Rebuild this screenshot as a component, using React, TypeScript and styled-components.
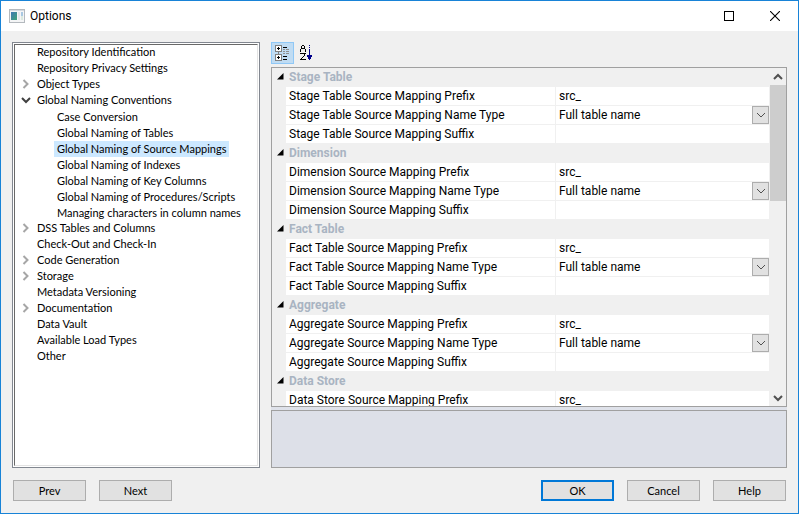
import React from "react";
import styled, { createGlobalStyle } from "styled-components";

const uiFont = '"Roboto", "Open Sans", sans-serif';
const treeFont = '"Lato", "DejaVu Sans", sans-serif';

const GlobalStyle = createGlobalStyle`
  *, *::before, *::after { box-sizing: border-box; }
  body { margin: 0; background: #fff; }
  button, input, select { font: inherit; color: inherit; margin: 0; border-radius: 0; }
`;

const Dialog = styled.div`
  display: flex;
  flex-direction: column;
  height: 100vh;
  margin-right: 1px;
  border: 1px solid #1883d7;
  background: #f0f0f0;
  color: #000;
  font: 12px/18px ${uiFont};
`;

const TitleBar = styled.header`
  display: flex;
  align-items: center;
  height: 30px;
  flex: none;
  padding-left: 8px;
  background: #fff;
`;

const Title = styled.h1`
  flex: 1;
  margin: 0 0 0 5px;
  font: inherit;
`;

const CaptionButton = styled.button`
  display: grid;
  place-items: center;
  width: 46px;
  height: 28px;
  padding: 0;
  border: 0;
  background: transparent;
`;

const Content = styled.main`
  display: flex;
  flex: 1;
  gap: 11px;
  min-height: 0;
  padding: 11px 11px 0;
`;

const TreeFrame = styled.nav`
  flex: 0 0 32%;
  padding: 1px;
  border: 1px solid #828790;
  background: #fff;
`;

const Tree = styled.ul`
  height: 100%;
  margin: 0;
  padding: 0;
  overflow: hidden;
  list-style: none;
  border: 1px solid;
  border-color: #696969 #e3e3e3 #e3e3e3 #696969;
  font: 11px/16px ${treeFont};
`;

const TreeItem = styled.li<{ $level: number }>`
  display: flex;
  height: 16px;
  line-height: ${p => (p.$level ? 15 : 13)}px;
  padding-left: ${p => (p.$level ? 39 : 3)}px;
`;

const Expander = styled.button`
  display: grid;
  place-items: center;
  width: 16px;
  height: 14px;
  padding: 0;
  border: 0;
  background: none;
`;

const ExpanderSpace = styled.span`
  width: 16px;
`;

const TreeLink = styled.a<{ $selected?: boolean }>`
  height: 16px;
  padding: 0 3px;
  color: #000;
  text-decoration: none;
  white-space: nowrap;
  background: ${p => (p.$selected ? "#cce8ff" : "transparent")};
`;

const Properties = styled.section`
  display: flex;
  flex: 1;
  flex-direction: column;
  min-width: 0;
`;

const Toolbar = styled.div`
  display: flex;
  gap: 1px;
  height: 25px;
  flex: none;
`;

const ToolButton = styled.button<{ $pressed?: boolean }>`
  display: grid;
  place-items: center;
  width: 23px;
  height: 22px;
  padding: 0;
  border: 1px solid ${p => (p.$pressed ? "#90c8f6" : "transparent")};
  background: ${p => (p.$pressed ? "#c0dcf3" : "transparent")};
`;

const GridFrame = styled.div`
  display: flex;
  flex: 1;
  min-height: 0;
  border: 1px solid #a0a0a0;
`;

const GridRows = styled.div`
  flex: 1;
  min-width: 0;
  overflow: hidden;
  margin-right: 1px;
`;

const Category = styled.h2`
  display: flex;
  align-items: flex-start;
  height: 19px;
  margin: 0;
  font: bold 12px/18px ${uiFont};
  color: #a9b4c2;
`;

const CategoryToggle = styled.button`
  display: grid;
  place-items: center;
  width: 17px;
  height: 17px;
  padding: 0;
  border: 0;
  background: none;
`;

const PropertyRow = styled.div`
  display: grid;
  grid-template-columns: 269px 1fr;
  height: 19px;
  margin-left: 14px;
  border-bottom: 1px solid #f0f0f0;
  background: #fff;
`;

const PropertyName = styled.label`
  padding-left: 3px;
  white-space: nowrap;
`;

const PropertyValue = styled.div`
  display: grid;
  border-left: 1px solid #f0f0f0;
  min-width: 0;
`;

const TextValue = styled.input`
  grid-area: 1 / 1;
  width: 100%;
  height: 18px;
  padding: 0 0 0 3px;
  border: 0;
  outline: 0;
  background: transparent;
`;

const SelectValue = styled.select`
  grid-area: 1 / 1;
  width: 100%;
  height: 18px;
  padding: 0 20px 0 3px;
  border: 0;
  outline: 0;
  appearance: none;
  background: transparent;
`;

const DropMark = styled.span`
  display: grid;
  grid-area: 1 / 1;
  place-items: center;
  justify-self: end;
  width: 17px;
  height: 18px;
  border: 1px solid #adadad;
  background: #e1e1e1;
  pointer-events: none;
`;

const ScrollBar = styled.div`
  display: grid;
  grid-template-rows: 17px 1fr 17px;
  width: 16px;
  flex: none;
  background: #f0f0f0;
`;

const ScrollButton = styled.button`
  display: grid;
  place-items: center;
  padding: 0;
  border: 0;
  background: none;
`;

const ScrollThumb = styled.div`
  height: 38%;
  background: #cdcdcd;
`;

const Splitter = styled.div`
  height: 3px;
  flex: none;
  background: #dfe2ea;
`;

const HelpPane = styled.div`
  height: 58px;
  flex: none;
  border: 1px solid #a0a0a0;
  background: #dde0e8;
`;

const Footer = styled.footer`
  display: flex;
  flex: none;
  gap: 13px;
  padding: 12px;
  font: 11px/16px ${treeFont};
`;

const PushButton = styled.button<{ $primary?: boolean; $pushRight?: boolean }>`
  width: 73px;
  height: 21px;
  padding: 0;
  border: ${p => (p.$primary ? "2px solid #0078d7" : "1px solid #adadad")};
  background: #e1e1e1;
  ${p => p.$pushRight && "margin-left: auto;"}
`;

type Node = { text: string; level?: number; state?: "open" | "closed"; selected?: boolean };

const nodes: Node[] = [
  { text: "Repository Identification" },
  { text: "Repository Privacy Settings" },
  { text: "Object Types", state: "closed" },
  { text: "Global Naming Conventions", state: "open" },
  { text: "Case Conversion", level: 1 },
  { text: "Global Naming of Tables", level: 1 },
  { text: "Global Naming of Source Mappings", level: 1, selected: true },
  { text: "Global Naming of Indexes", level: 1 },
  { text: "Global Naming of Key Columns", level: 1 },
  { text: "Global Naming of Procedures/Scripts", level: 1 },
  { text: "Managing characters in column names", level: 1 },
  { text: "DSS Tables and Columns", state: "closed" },
  { text: "Check-Out and Check-In" },
  { text: "Code Generation", state: "closed" },
  { text: "Storage", state: "closed" },
  { text: "Metadata Versioning" },
  { text: "Documentation", state: "closed" },
  { text: "Data Vault" },
  { text: "Available Load Types" },
  { text: "Other" },
];

type Field = "Prefix" | "Name Type" | "Suffix";

const allFields: Field[] = ["Prefix", "Name Type", "Suffix"];

const categories: { name: string; fields: Field[] }[] = [
  { name: "Stage Table", fields: allFields },
  { name: "Dimension", fields: allFields },
  { name: "Fact Table", fields: allFields },
  { name: "Aggregate", fields: allFields },
  { name: "Data Store", fields: ["Prefix"] },
];

const Chevron = ({ dir, color, width = 2 }: { dir: "right" | "down" | "up"; color: string; width?: number }) => {
  const paths = { right: "M2.5 1 L6.5 5 L2.5 9", down: "M1 3 L5 7 L9 3", up: "M1 7 L5 3 L9 7" };
  return (
    <svg width="10" height="10" viewBox="0 0 10 10" aria-hidden="true">
      <path d={paths[dir]} fill="none" stroke={color} strokeWidth={width} />
    </svg>
  );
};

const AppIcon = () => (
  <svg width="16" height="14" viewBox="0 0 16 14" aria-hidden="true">
    <defs>
      <linearGradient id="screen" x1="0" y1="0" x2="1" y2="1">
        <stop offset="0" stopColor="#3f78b4" />
        <stop offset="1" stopColor="#3fa377" />
      </linearGradient>
    </defs>
    <rect x=".5" y=".5" width="15" height="13" fill="#f4f5f6" stroke="#b4b9be" />
    <path d="M1 1.5h14" stroke="#d4dae0" />
    <rect x="2" y="3" width="6" height="8" fill="url(#screen)" />
    <rect x="9" y="3" width="2" height="8" fill="#e3e6ea" />
    <rect x="12" y="3" width="2" height="4" fill="#a9c8e2" />
    <rect x="12" y="7" width="2" height="4" fill="#dbe9df" />
  </svg>
);

const CategorizedIcon = () => (
  <svg width="15" height="16" viewBox="0 0 15 16" shapeRendering="crispEdges" aria-hidden="true">
    <path d="M0 0h7v7h-7z M0 9h7v7h-7z" fill="#808080" />
    <path d="M1 1h5v5h-5z M1 10h5v5h-5z" fill="#fff" />
    <path d="M3 7h1v2h-1z" fill="#808080" />
    <path d="M3 2h1v3h-1z M2 3h3v1h-3z M3 11h1v3h-1z M2 12h3v1h-3z" fill="#000" />
    <path d="M8 2h4v1h-4z M8 11h4v1h-4z M8 14h4v1h-4z" fill="#000" />
    <path d="M8 4h2v1h-2z M11 4h3v1h-3z M8 6h2v1h-2z M11 6h3v1h-3z M8 8h2v1h-2z M11 8h3v1h-3z" fill="#909090" />
  </svg>
);

const AlphabeticalIcon = () => (
  <svg width="13" height="16" viewBox="0 0 13 16" shapeRendering="crispEdges" aria-hidden="true">
    <path
      d="M2 0h2v1h-2z M1 1h1v2h-1z M4 1h1v2h-1z M1 3h4v1h-4z M0 4h1v3h-1z M5 4h1v3h-1z M0 8h6v1h-6z M4 9h1v2h-1z M3 11h1v1h-1z M2 12h1v1h-1z M1 13h1v1h-1z M0 14h6v1h-6z"
      fill="#000"
    />
    <path d="M9 0h1v1h-1z M9 2h1v1h-1z M9 4h1v7h-1z M7 10h5v1h-5z M7 11h5v1h-5z M8 12h3v2h-3z M9 14h1v1h-1z" fill="#00008b" />
  </svg>
);

function PropertyEditor({ id, field }: { id: string; field: Field }) {
  if (field !== "Name Type") {
    return <TextValue id={id} defaultValue={field === "Prefix" ? "src_" : ""} />;
  }
  return (
    <>
      <SelectValue id={id}>
        <option>Full table name</option>
      </SelectValue>
      <DropMark>
        <Chevron dir="down" color="#505050" width={1} />
      </DropMark>
    </>
  );
}

function CategoryGroup({ name, fields }: { name: string; fields: Field[] }) {
  return (
    <>
      <Category>
        <CategoryToggle aria-label={`Collapse ${name}`}>
          <svg width="7" height="7" viewBox="0 0 7 7" aria-hidden="true">
            <path d="M6.5 0V6.5H0Z" fill="#000" />
          </svg>
        </CategoryToggle>
        {name}
      </Category>
      {fields.map(field => {
        const id = `${name}-${field}`.toLowerCase().replace(/ /g, "-");
        return (
          <PropertyRow key={field}>
            <PropertyName htmlFor={id}>
              {name} Source Mapping {field}
            </PropertyName>
            <PropertyValue>
              <PropertyEditor id={id} field={field} />
            </PropertyValue>
          </PropertyRow>
        );
      })}
    </>
  );
}

export default function App() {
  return (
    <>
      <GlobalStyle />
      <Dialog role="dialog" aria-label="Options">
        <TitleBar>
          <AppIcon />
          <Title>Options</Title>
          <CaptionButton aria-label="Maximize">
            <svg width="10" height="10" viewBox="0 0 10 10" aria-hidden="true">
              <rect x=".5" y=".5" width="9" height="9" fill="none" stroke="#000" />
            </svg>
          </CaptionButton>
          <CaptionButton aria-label="Close">
            <svg width="10" height="10" viewBox="0 0 10 10" aria-hidden="true">
              <path d="M0 0L10 10M10 0L0 10" stroke="#000" strokeWidth="1.1" />
            </svg>
          </CaptionButton>
        </TitleBar>
        <Content>
          <TreeFrame aria-label="Option pages">
            <Tree>
              {nodes.map(n => (
                <TreeItem key={n.text} $level={n.level ?? 0}>
                  {n.state && (
                    <Expander aria-label={`Toggle ${n.text}`}>
                      <Chevron dir={n.state === "open" ? "down" : "right"} color={n.state === "open" ? "#404040" : "#a6a6a6"} />
                    </Expander>
                  )}
                  {!n.state && !n.level && <ExpanderSpace />}
                  <TreeLink href="#" $selected={n.selected} aria-current={n.selected ? "page" : undefined}>
                    {n.text}
                  </TreeLink>
                </TreeItem>
              ))}
            </Tree>
          </TreeFrame>
          <Properties>
            <Toolbar>
              <ToolButton $pressed aria-label="Categorized" aria-pressed="true">
                <CategorizedIcon />
              </ToolButton>
              <ToolButton aria-label="Alphabetical">
                <AlphabeticalIcon />
              </ToolButton>
            </Toolbar>
            <GridFrame>
              <GridRows>
                {categories.map(c => (
                  <CategoryGroup key={c.name} name={c.name} fields={c.fields} />
                ))}
              </GridRows>
              <ScrollBar>
                <ScrollButton aria-label="Scroll up">
                  <Chevron dir="up" color="#505050" />
                </ScrollButton>
                <ScrollThumb />
                <ScrollButton aria-label="Scroll down">
                  <Chevron dir="down" color="#505050" />
                </ScrollButton>
              </ScrollBar>
            </GridFrame>
            <Splitter />
            <HelpPane />
          </Properties>
        </Content>
        <Footer>
          <PushButton>Prev</PushButton>
          <PushButton>Next</PushButton>
          <PushButton $primary $pushRight>OK</PushButton>
          <PushButton>Cancel</PushButton>
          <PushButton>Help</PushButton>
        </Footer>
      </Dialog>
    </>
  );
}
